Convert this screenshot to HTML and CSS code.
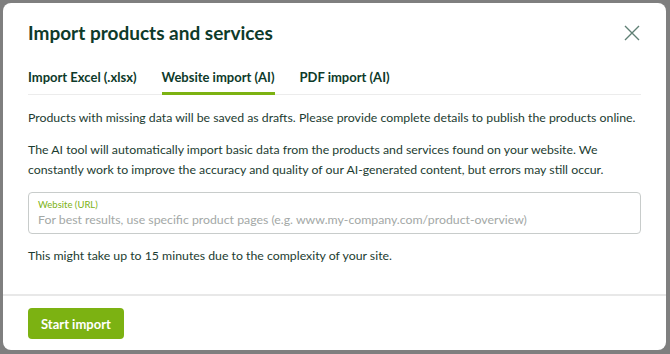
FILE: index.html
```html
<!DOCTYPE html>
<html lang="en">
<head>
  <meta charset="utf-8">
  <title>Import products and services</title>
  <link rel="stylesheet" href="styles.css">
</head>
<body>

<div class="modal">
  <div class="modal-head">
    <h1 class="title">Import products and services</h1>
    <button class="close" aria-label="Close">
      <svg width="16" height="16" viewBox="0 0 16 16">
        <path d="M1 1 L15 15 M15 1 L1 15" stroke="#5f7f74" stroke-width="1.4" fill="none"/>
      </svg>
    </button>
  </div>

  <div class="tabs">
    <span class="tab">Import Excel (.xlsx)</span>
    <span class="tab active">Website import (AI)</span>
    <span class="tab">PDF import (AI)</span>
  </div>

  <div class="modal-body">
    <p>Products with missing data will be saved as drafts. Please provide complete details to publish the products online.</p>
    <p>The AI tool will automatically import basic data from the products and services found on your website. We constantly work to improve the accuracy and quality of our AI-generated content, but errors may still occur.</p>

    <label class="field">
      <span class="field-label">Website (URL)</span>
      <input type="text" placeholder="For best results, use specific product pages (e.g. www.my-company.com/product-overview)">
    </label>

    <p>This might take up to 15 minutes due to the complexity of your site.</p>
  </div>

  <div class="modal-foot">
    <button class="btn">Start import</button>
  </div>
</div>

</body>
</html>
```

FILE: styles.css
```css
html {
  height: 100%;
}
body {
  margin: 0;
  padding: 3px 4px 4px 3px;
  background: #7f7f7f;
  font-family: Lato, "Noto Sans", sans-serif;
  color: #1c3c31;
  height: 100%;
  box-sizing: border-box;
}

.modal {
  background: #fff;
  border-radius: 8px;
  height: 347px;
  box-sizing: border-box;
  display: flex;
  flex-direction: column;
}

.modal-head {
  display: flex;
  justify-content: space-between;
  align-items: center;
  padding: 17px 25px 0 25px;
}

.title {
  margin: 0;
  font-size: 19px;
  font-weight: 700;
  line-height: 26px;
  color: #0e3a2a;
}

.close {
  border: 0;
  background: none;
  padding: 0;
  margin-right: 1px;
  width: 16px;
  height: 16px;
  cursor: pointer;
}

.tabs {
  display: flex;
  gap: 25px;
  margin: 21px 25px 0 25px;
  border-bottom: 1px solid #ececec;
}

.tab {
  font-size: 13px;
  font-weight: 700;
  line-height: 20px;
  padding-bottom: 5px;
  color: #0e3a2a;
  border-bottom: 3px solid transparent;
  margin-bottom: -1px;
}

.tab.active {
  border-bottom-color: #7cb212;
}

.modal-body {
  padding: 13px 25px 0 25px;
  flex: 1;
}

.modal-body p {
  margin: 0 0 12px 0;
  font-size: 12.3px;
  line-height: 20px;
}

.field {
  display: block;
  border: 1px solid #c8cccb;
  border-radius: 4px;
  padding: 5px 9px 4px 9px;
  margin: 11px 0 12px 0;
}

.field-label {
  display: block;
  font-size: 9.5px;
  line-height: 13px;
  color: #7cb212;
}

.field input {
  display: block;
  width: 100%;
  border: 0;
  padding: 0;
  outline: none;
  font-family: Lato, "Noto Sans", sans-serif;
  font-size: 12.3px;
  line-height: 18px;
  color: #1c3c31;
}

.field input::placeholder {
  color: #a3a8a6;
}

.modal-foot {
  border-top: 2px solid #e8e8e8;
  padding: 12px 25px 11px 25px;
}

.btn {
  border: 0;
  border-radius: 4px;
  background: #7cb212;
  color: #fff;
  font-family: Lato, "Noto Sans", sans-serif;
  font-size: 13px;
  font-weight: 700;
  padding: 0 13px;
  height: 31px;
  cursor: pointer;
}
```
